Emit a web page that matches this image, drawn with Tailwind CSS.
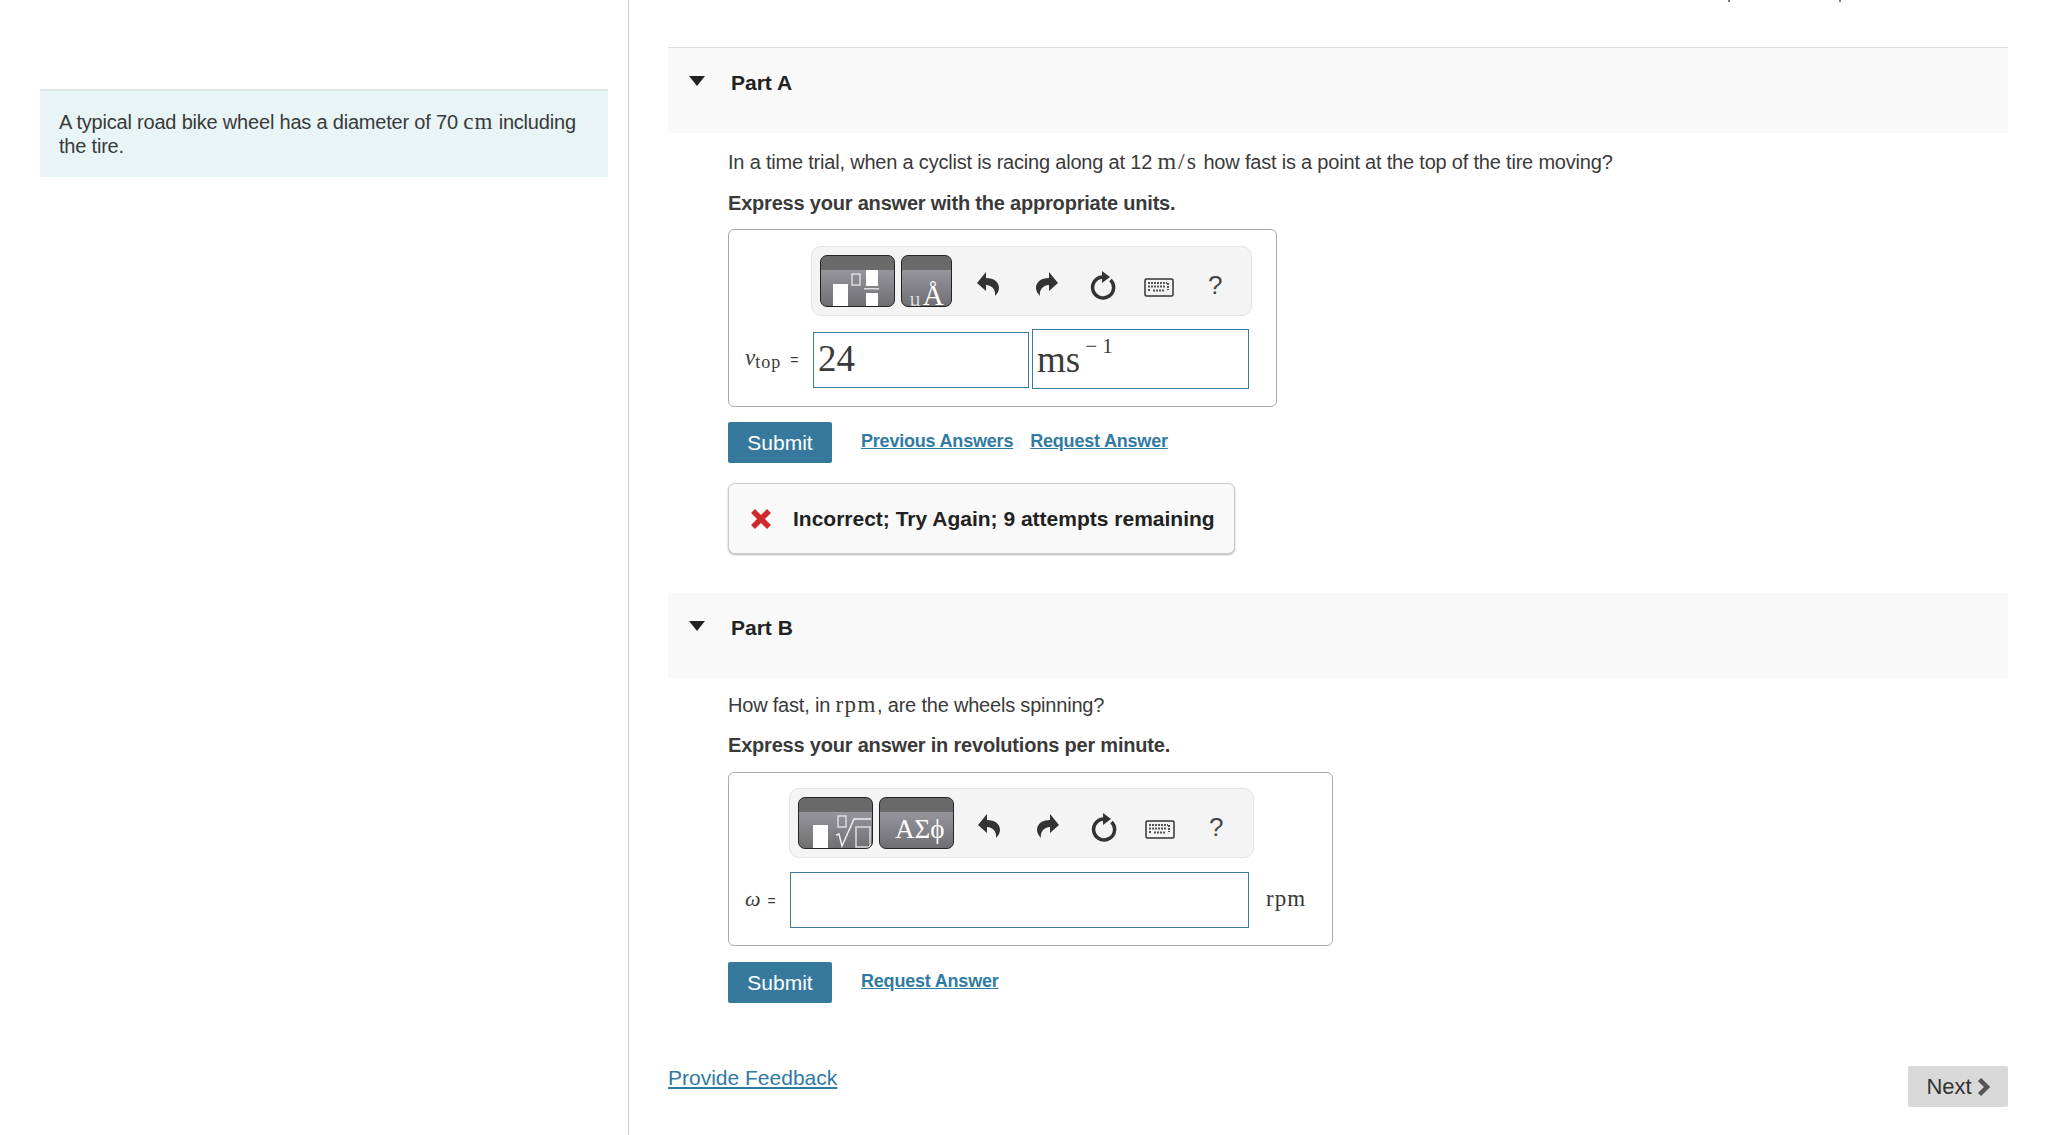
<!DOCTYPE html>
<html lang="en">
<head>
  <meta charset="UTF-8" />
  <title>Part A and Part B</title>
  <script src="https://cdn.jsdelivr.net/npm/@tailwindcss/browser@4"></script>
</head>
<body class="bg-white text-[#3a3a3a] font-['Liberation_Sans',Arial,sans-serif] text-[20px] leading-[24px] tracking-[-0.2px]">
<div class="relative flex h-[1135px] overflow-hidden">

  <!-- cut-off header text at the very top -->
  <span class="absolute top-0 left-[1728px] w-[2px] h-[2px] bg-[#777]"></span>
  <span class="absolute top-0 left-[1839px] w-[2px] h-[2px] bg-[#777]"></span>

  <!-- Left intro column -->
  <aside class="w-[629px] shrink-0 border-r border-[#c5d3e3] pl-[40px] pr-[20px] pt-[89px]">
    <div class="h-[88px] bg-[#e8f4f6] border-t-2 border-[#dde6e6] px-[19px] pt-[19px]">
      A typical road bike wheel has a diameter of 70 <span class="font-['Liberation_Serif',serif] text-[23px] leading-[0] tracking-[1px]">cm</span> including the tire.
    </div>
  </aside>

  <!-- Parts -->
  <main class="w-[1379px] pl-[39px] pt-[47px]">

    <!-- Part A -->
    <div class="h-[86px] bg-[#f9f9f9] border-t border-[#dedede] flex items-start pl-[20px] pt-[23px]">
      <svg class="mt-[5px]" width="18" height="10" viewBox="0 0 18 10"><path d="M1 0h16l-8 10z" fill="#222"/></svg>
      <span class="ml-[25px] font-bold text-[21px] text-[#222] tracking-normal">Part A</span>
    </div>
    <div class="pl-[60px]">
      <p class="mt-[17px]">In a time trial, when a cyclist is racing along at 12 <span class="font-['Liberation_Serif',serif] text-[24px] leading-[0] tracking-[2px]">m/s</span> how fast is a point at the top of the tire moving?</p>
      <p class="mt-[17px] font-bold">Express your answer with the appropriate units.</p>

      <div class="mt-[14px] w-[549px] h-[178px] border border-[#aaa] rounded-[6px] pt-[16px] pl-[82px]">
        <div class="w-[441px] h-[70px] bg-[#f4f4f4] border border-[#e3e3e3] rounded-[10px] flex items-center pl-[8px]">
          <div class="w-[75px] h-[52px] rounded-[7px] border border-[#222] bg-[linear-gradient(#6a6a6a_0,#6a6a6a_28%,#96959c_29%,#6f6f73_100%)] overflow-hidden shrink-0">
            <svg width="73" height="50" viewBox="0 0 73 50"><rect x="12" y="28" width="15" height="22" fill="#fff"/><rect x="31" y="18" width="8" height="11" fill="none" stroke="#ddd" stroke-width="1.5"/><rect x="45" y="14" width="12" height="16" fill="#fff"/><rect x="43" y="32" width="15" height="1.5" fill="#ddd"/><rect x="45" y="37" width="12" height="13" fill="#fff"/></svg>
          </div>
          <div class="ml-[6px] w-[51px] h-[52px] rounded-[7px] border border-[#222] bg-[linear-gradient(#6a6a6a_0,#6a6a6a_28%,#96959c_29%,#6f6f73_100%)] overflow-hidden shrink-0 flex items-end justify-center font-['Liberation_Serif',serif] text-white tracking-normal">
            <span class="text-[20px] leading-[20px] mr-[2px] -mb-[3px] text-[#ddd]">µ</span><span class="text-[29px] leading-[26px] -mb-[2px]">Å</span>
          </div>
          <div class="ml-[25px] mt-[8px] flex items-center">
            <svg width="22" height="26" viewBox="0 0 22 26"><path d="M0 11 9 0v6c8 0 13 4 13 10 0 3-2 6-4 8 1-6-3-11-9-11v6z" fill="#333"/></svg>
            <svg class="ml-[37px]" width="22" height="26" viewBox="0 0 22 26"><path d="M22 11 13 0v6C5 6 0 10 0 16c0 3 2 6 4 8-1-6 3-11 9-11v6z" fill="#333"/></svg>
            <svg class="ml-[32px]" width="26" height="30" viewBox="0 0 26 30"><path d="M20.500 10A10.500 10.500 0 1 1 12 7" fill="none" stroke="#333" stroke-width="3.500"/><path d="M12 1l8 6-8 6z" fill="#333"/></svg>
            <svg class="ml-[28px] mt-[4px]" width="30" height="19" viewBox="0 0 30 19"><rect x="1" y="1" width="28" height="17" rx="1.500" fill="#f4f4f4" stroke="#333" stroke-width="1.500"/><path d="M4 5h19M4 8.500h17M4 12h2M9 12.500h12M24 5v7" stroke="#555" stroke-width="2" stroke-dasharray="2 1" fill="none"/></svg>
            <span class="ml-[34px] text-[26px] tracking-normal text-[#444]">?</span>
          </div>
        </div>
        <div class="flex -ml-[82px] mt-[13px]">
          <div class="w-[84px] pl-[16px] pt-[17px] font-['Liberation_Serif',serif] text-[23px] tracking-normal whitespace-nowrap"><i>v</i><span class="text-[18px] tracking-[1px] align-[-3px]">top</span><span class="font-['Liberation_Sans',sans-serif] text-[14px] ml-[9px]">=</span></div>
          <div class="mt-[3px] w-[216px] h-[56px] border border-[#3a7a9c] font-['Liberation_Serif',serif] text-[37px] leading-[52px] pl-[4px] tracking-normal">24</div>
          <div class="ml-[3px] w-[217px] h-[60px] border border-[#3a7a9c] font-['Liberation_Serif',serif] text-[37px] leading-[60px] pl-[4px] tracking-normal whitespace-nowrap">ms<sup class="text-[21px] ml-[5px] top-[-19px] relative align-baseline">− 1</sup></div>
        </div>
      </div>

      <div class="mt-[15px] flex items-center h-[41px]">
        <button class="w-[104px] h-[41px] bg-[#37799c] text-white rounded-[2px] tracking-normal text-[21px]">Submit</button>
        <a class="ml-[29px] font-bold text-[18px] text-[#2f7ba3] underline -mt-[3px]">Previous Answers</a>
        <a class="ml-[17px] font-bold text-[18px] text-[#2f7ba3] underline -mt-[3px]">Request Answer</a>
      </div>

      <div class="mt-[20px] w-[507px] h-[71px] bg-[#f9f9f9] border border-[#ccc] rounded-[7px] shadow-[0_1px_2px_rgba(0,0,0,0.3)] flex items-center pl-[21px]">
        <svg width="22" height="22" viewBox="0 0 22 22"><path d="M3 3l16 16M19 3 3 19" stroke="#cf2a2a" stroke-width="5.500"/></svg>
        <span class="ml-[21px] font-bold text-[#222] tracking-normal text-[21px]">Incorrect; Try Again; 9 attempts remaining</span>
      </div>
    </div>

    <!-- Part B -->
    <div class="mt-[39px] h-[85px] bg-[#f9f9f9] flex items-start pl-[20px] pt-[23px]">
      <svg class="mt-[5px]" width="18" height="10" viewBox="0 0 18 10"><path d="M1 0h16l-8 10z" fill="#222"/></svg>
      <span class="ml-[25px] font-bold text-[21px] text-[#222] tracking-normal">Part B</span>
    </div>
    <div class="pl-[60px]">
      <p class="mt-[15px]">How fast, in <span class="font-['Liberation_Serif',serif] text-[23px] leading-[0] tracking-[1.500px]">rpm</span>, are the wheels spinning?</p>
      <p class="mt-[16px] font-bold">Express your answer in revolutions per minute.</p>

      <div class="mt-[15px] w-[605px] h-[174px] border border-[#aaa] rounded-[6px] pt-[15px] pl-[60px]">
        <div class="w-[465px] h-[70px] bg-[#f4f4f4] border border-[#e3e3e3] rounded-[10px] flex items-center pl-[8px]">
          <div class="w-[75px] h-[52px] rounded-[7px] border border-[#222] bg-[linear-gradient(#6a6a6a_0,#6a6a6a_28%,#96959c_29%,#6f6f73_100%)] overflow-hidden shrink-0">
            <svg width="73" height="50" viewBox="0 0 73 50"><rect x="14" y="27" width="15" height="23" fill="#fff"/><rect x="39" y="18" width="8" height="11" fill="none" stroke="#ddd" stroke-width="1.500"/><path d="M37 37l3-1 3 12 12-27h17" fill="none" stroke="#eee" stroke-width="1.500"/><rect x="57" y="29" width="14" height="20" fill="none" stroke="#ddd" stroke-width="1.500"/></svg>
          </div>
          <div class="ml-[6px] w-[75px] h-[52px] rounded-[7px] border border-[#222] bg-[linear-gradient(#6a6a6a_0,#6a6a6a_28%,#96959c_29%,#6f6f73_100%)] overflow-hidden shrink-0 font-['Liberation_Serif',serif] text-white text-[27px] leading-[32px] pt-[15px] pl-[15px] tracking-normal whitespace-nowrap">ΑΣϕ</div>
          <div class="ml-[24px] mt-[8px] flex items-center">
            <svg width="22" height="26" viewBox="0 0 22 26"><path d="M0 11 9 0v6c8 0 13 4 13 10 0 3-2 6-4 8 1-6-3-11-9-11v6z" fill="#333"/></svg>
            <svg class="ml-[37px]" width="22" height="26" viewBox="0 0 22 26"><path d="M22 11 13 0v6C5 6 0 10 0 16c0 3 2 6 4 8-1-6 3-11 9-11v6z" fill="#333"/></svg>
            <svg class="ml-[32px]" width="26" height="30" viewBox="0 0 26 30"><path d="M20.500 10A10.500 10.500 0 1 1 12 7" fill="none" stroke="#333" stroke-width="3.500"/><path d="M12 1l8 6-8 6z" fill="#333"/></svg>
            <svg class="ml-[28px] mt-[4px]" width="30" height="19" viewBox="0 0 30 19"><rect x="1" y="1" width="28" height="17" rx="1.500" fill="#f4f4f4" stroke="#333" stroke-width="1.500"/><path d="M4 5h19M4 8.500h17M4 12h2M9 12.500h12M24 5v7" stroke="#555" stroke-width="2" stroke-dasharray="2 1" fill="none"/></svg>
            <span class="ml-[34px] text-[26px] tracking-normal text-[#444]">?</span>
          </div>
        </div>
        <div class="flex -ml-[60px] mt-[14px]">
          <div class="w-[61px] pl-[16px] pt-[15px] font-['Liberation_Serif',serif] text-[22px] tracking-normal whitespace-nowrap"><i>ω</i><span class="font-['Liberation_Sans',sans-serif] text-[14px] ml-[7px]">=</span></div>
          <div class="w-[459px] h-[56px] border border-[#3a7a9c]"></div>
          <div class="ml-[17px] pt-[15px] font-['Liberation_Serif',serif] text-[23px] tracking-[1px]">rpm</div>
        </div>
      </div>

      <div class="mt-[16px] flex items-center h-[41px]">
        <button class="w-[104px] h-[41px] bg-[#37799c] text-white rounded-[2px] tracking-normal text-[21px]">Submit</button>
        <a class="ml-[29px] font-bold text-[18px] text-[#2f7ba3] underline -mt-[3px]">Request Answer</a>
      </div>
    </div>

    <!-- Footer -->
    <div class="mt-[63px] flex justify-between w-[1340px]">
      <a class="text-[21px] tracking-normal text-[#2f7ba3] underline">Provide Feedback</a>
      <button class="w-[100px] h-[41px] bg-[#d9d9d9] rounded-[2px] text-[#333] text-[22px] tracking-normal flex items-center justify-center gap-[5px]">Next <svg width="13" height="20" viewBox="0 0 13 20"><path d="M2.500 2.500 10 10l-7.500 7.500" fill="none" stroke="#555" stroke-width="4.500"/></svg></button>
    </div>
  </main>
</div>
</body>
</html>
